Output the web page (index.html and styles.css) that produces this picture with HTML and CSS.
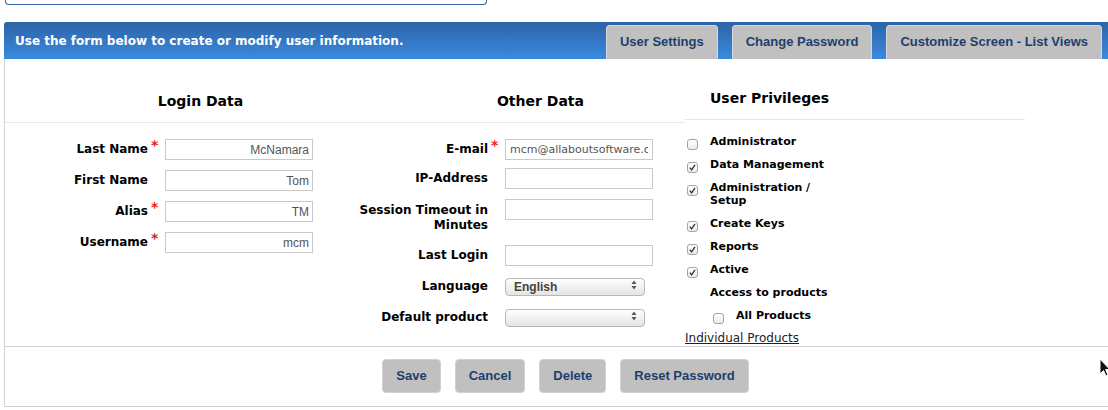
FILE: index.html
```html
<!DOCTYPE html>
<html lang="en">
<head>
<meta charset="utf-8">
<title>User information</title>
<link rel="stylesheet" href="styles.css">
</head>
<body>
<div class="topbox"></div>
<div class="header">
  <div class="intro">Use the form below to create or modify user information.</div>
  <div class="tabs">
    <button class="tab">User Settings</button>
    <button class="tab">Change Password</button>
    <button class="tab">Customize Screen - List Views</button>
  </div>
</div>
<div class="panel">
  <div class="main">
    <div class="left">
      <div class="heads">
        <h2 class="h-login">Login Data</h2>
        <h2 class="h-other">Other Data</h2>
      </div>
      <div class="fields">
        <div class="col-login">
          <label class="lbl">Last Name</label><span class="star">*</span><input class="inp" value="McNamara">
          <label class="lbl">First Name</label><span class="star"></span><input class="inp" value="Tom">
          <label class="lbl">Alias</label><span class="star">*</span><input class="inp" value="TM">
          <label class="lbl">Username</label><span class="star">*</span><input class="inp" value="mcm">
        </div>
        <div class="col-other">
          <label class="lbl">E-mail</label><span class="star">*</span><input class="inp inp-left" value="mcm@allaboutsoftware.com">
          <label class="lbl">IP-Address</label><span class="star"></span><input class="inp" value="">
          <label class="lbl two">Session Timeout in<br>Minutes</label><span class="star"></span><input class="inp" value="">
          <label class="lbl">Last Login</label><span class="star"></span><input class="inp" value="">
          <label class="lbl">Language</label><span class="star"></span>
          <div class="sel"><select><option>English</option></select><svg class="arr" width="6" height="10" viewBox="0 0 6 10"><path d="M3 0.5 L5.5 4 L0.5 4 Z M3 9.5 L5.5 6 L0.5 6 Z" fill="#555"/></svg></div>
          <label class="lbl">Default product</label><span class="star"></span>
          <div class="sel"><select><option></option></select><svg class="arr" width="6" height="10" viewBox="0 0 6 10"><path d="M3 0.5 L5.5 4 L0.5 4 Z M3 9.5 L5.5 6 L0.5 6 Z" fill="#555"/></svg></div>
        </div>
      </div>
    </div>
    <div class="privs">
      <div class="privs-head"><h2>User Privileges</h2></div>
      <ul class="checks">
        <li class="check"><span class="cb"></span><span class="ctext">Administrator</span></li>
        <li class="check"><span class="cb on"><svg width="9" height="9" viewBox="0 0 9 9"><path d="M1.8 4.6 L3.6 6.8 L7 1.8" fill="none" stroke="#333" stroke-width="1.3"/></svg></span><span class="ctext">Data Management</span></li>
        <li class="check"><span class="cb on"><svg width="9" height="9" viewBox="0 0 9 9"><path d="M1.8 4.6 L3.6 6.8 L7 1.8" fill="none" stroke="#333" stroke-width="1.3"/></svg></span><span class="ctext">Administration / Setup</span></li>
        <li class="check"><span class="cb on"><svg width="9" height="9" viewBox="0 0 9 9"><path d="M1.8 4.6 L3.6 6.8 L7 1.8" fill="none" stroke="#333" stroke-width="1.3"/></svg></span><span class="ctext">Create Keys</span></li>
        <li class="check"><span class="cb on"><svg width="9" height="9" viewBox="0 0 9 9"><path d="M1.8 4.6 L3.6 6.8 L7 1.8" fill="none" stroke="#333" stroke-width="1.3"/></svg></span><span class="ctext">Reports</span></li>
        <li class="check"><span class="cb on"><svg width="9" height="9" viewBox="0 0 9 9"><path d="M1.8 4.6 L3.6 6.8 L7 1.8" fill="none" stroke="#333" stroke-width="1.3"/></svg></span><span class="ctext">Active</span></li>
        <li class="check plain"><span class="ctext">Access to products</span></li>
        <li class="check sub"><span class="cb"></span><span class="ctext">All Products</span></li>
      </ul>
      <a class="link" href="#">Individual Products</a>
    </div>
  </div>
  <div class="actions">
    <button class="btn">Save</button>
    <button class="btn">Cancel</button>
    <button class="btn">Delete</button>
    <button class="btn">Reset Password</button>
  </div>
</div>
<svg class="cursor" width="12" height="20" viewBox="0 0 12 20"><path d="M1 1 L1 16 L4.5 12.5 L7 18 L9 17 L6.6 11.6 L11 11.6 Z" fill="#111" stroke="#fff" stroke-width="1"/></svg>
</body>
</html>
```
FILE: styles.css
```css
* { box-sizing: border-box; }
html, body { margin: 0; overflow: hidden; }
body {
  font-family: "DejaVu Sans", Verdana, sans-serif;
  color: #000;
  background: #fff;
  width: 1108px;
  height: 410px;
  position: relative;
}
.topbox {
  margin-left: 5px;
  width: 482px;
  height: 5px;
  border: 1px solid #2f64a6;
  border-top: none;
  border-radius: 0 0 4px 4px;
}
.header {
  margin: 17px 0 0 4px;
  height: 37px;
  display: flex;
  justify-content: space-between;
  background: linear-gradient(#2c63a7, #3b8adf);
  border-radius: 3px 0 0 0;
}
.intro {
  align-self: center;
  padding-left: 11px;
  color: #fff;
  font-weight: bold;
  font-size: 12px;
}
.tabs {
  display: flex;
  align-self: flex-end;
  gap: 14px;
  margin-right: 6px;
}
.tab, .btn {
  font: bold 13px "Liberation Sans", Arial, sans-serif;
  color: #1d3e6d;
  background: #c0c0c0;
  cursor: pointer;
}
.tab {
  height: 34px;
  padding: 0 13px 2px;
  border: 1px solid #d8d8d8;
  border-bottom: none;
  border-radius: 4px 4px 0 0;
}
.panel {
  margin-left: 4px;
  border-left: 1px solid #d2d2d2;
}
.main {
  display: flex;
  height: 288px;
  border-bottom: 1px solid #cfcfcf;
}
.left { width: 680px; }
h2 {
  margin: 0;
  font-size: 14px;
  line-height: 17px;
  font-weight: bold;
}
.heads {
  display: flex;
  height: 64px;
  padding-top: 34px;
  border-bottom: 1px solid #e8e8e8;
}
.h-login { width: 391px; text-align: center; }
.h-other { flex: 1; text-align: center; }
.fields {
  display: flex;
  padding-top: 16px;
}
.col-login {
  width: 352px;
  display: grid;
  grid-template-columns: 143px 17px 148px;
  grid-auto-rows: 21px;
  row-gap: 10px;
  align-content: start;
}
.col-other {
  display: grid;
  grid-template-columns: 131px 17px 148px;
  grid-template-rows: 29px 31px 46px 31px 31px 21px;
  align-items: start;
}
.lbl {
  font-size: 12px;
  font-weight: bold;
  line-height: 15px;
  min-height: 21px;
  display: flex;
  align-items: center;
  justify-content: flex-end;
  text-align: right;
  white-space: nowrap;
}
.lbl.two { padding-top: 4px; }
.star {
  color: #e5221c;
  font-size: 14px;
  font-weight: bold;
  line-height: 12px;
  padding-left: 3px;
}
.inp {
  width: 148px;
  height: 21px;
  margin: 0;
  border: 1px solid #c9c9c9;
  border-radius: 0;
  padding: 0 3px;
  font: 12px "Liberation Sans", Arial, sans-serif;
  color: #555;
  text-align: right;
  outline: none;
}
.inp-left {
  text-align: left;
  font: 11px "DejaVu Sans", Verdana, sans-serif;
  color: #555;
  padding: 0 4px;
}
.sel {
  position: relative;
  width: 140px;
  height: 18px;
}
.sel select {
  appearance: none;
  -webkit-appearance: none;
  width: 100%;
  height: 18px;
  margin: 0;
  border: 1px solid #b8b8b8;
  border-radius: 4px;
  background: linear-gradient(#fefefe, #e4e4e4);
  font: bold 12px "Liberation Sans", Arial, sans-serif;
  color: #444;
  padding: 0 0 0 8px;
  outline: none;
}
.arr {
  position: absolute;
  right: 8px;
  top: 4px;
}
.privs { width: 340px; }
.privs-head {
  height: 61px;
  padding: 31px 0 0 25px;
  border-bottom: 1px solid #e6e6e6;
}
.checks {
  list-style: none;
  margin: 0;
  padding: 15px 0 0 2px;
  display: flex;
  flex-direction: column;
  gap: 10px;
}
.check {
  display: flex;
  align-items: flex-start;
  gap: 12px;
  font-size: 11px;
  font-weight: bold;
  line-height: 13px;
}
.ctext { width: 125px; }
.plain .ctext { margin-left: 23px; }
.sub { padding-left: 26px; }
.cb {
  flex: none;
  width: 11px;
  height: 11px;
  margin-top: 4px;
  margin-bottom: -2px;
  border: 1px solid #a4a4a4;
  border-radius: 3px;
  background: linear-gradient(#ffffff, #ececec);
  display: flex;
  align-items: center;
  justify-content: center;
}
.link {
  display: block;
  margin-top: 9px;
  font-size: 12px;
  line-height: 15px;
  color: #222;
  text-decoration: underline;
}
.actions {
  display: flex;
  justify-content: center;
  gap: 14px;
  padding: 12px 0 13px 18px;
  border-bottom: 1px solid #cccccc;
}
.btn {
  height: 34px;
  padding: 0 13px 2px;
  border: 1px solid #d2d2d2;
  border-radius: 4px;
}
.cursor {
  position: absolute;
  left: 1099px;
  top: 358px;
}
```
